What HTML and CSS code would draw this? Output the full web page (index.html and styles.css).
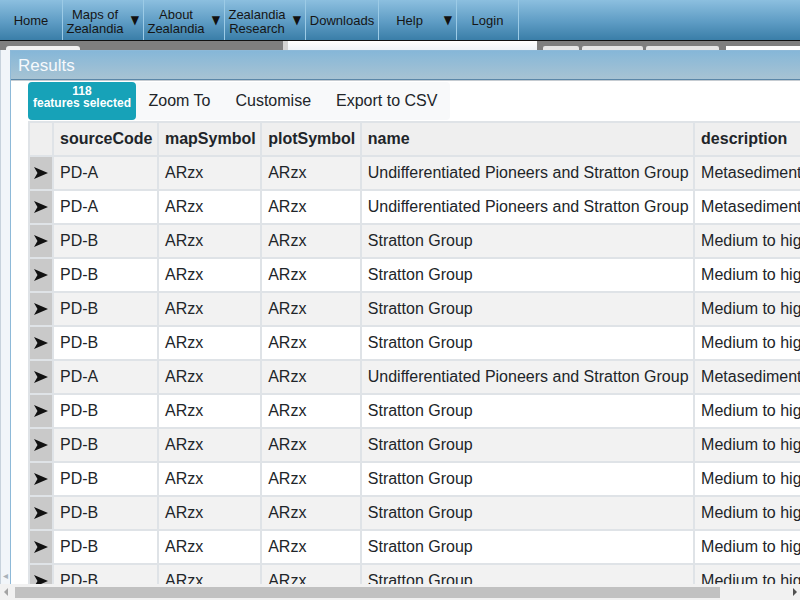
FILE: index.html
```html
<!DOCTYPE html>
<html>
<head>
<meta charset="utf-8">
<link rel="stylesheet" href="styles.css">
</head>
<body>
<div class="app">
  <nav class="nav">
    <div class="nav-item w-home"><span class="nav-label">Home</span></div>
    <div class="nav-item w-drop"><span class="nav-label two">Maps of<br>Zealandia</span><span class="caret">▼</span></div>
    <div class="nav-item w-drop"><span class="nav-label two">About<br>Zealandia</span><span class="caret">▼</span></div>
    <div class="nav-item w-drop"><span class="nav-label two">Zealandia<br>Research</span><span class="caret">▼</span></div>
    <div class="nav-item w-down"><span class="nav-label">Downloads</span></div>
    <div class="nav-item w-help"><span class="nav-label">Help</span><span class="caret">▼</span></div>
    <div class="nav-item w-login"><span class="nav-label">Login</span></div>
  </nav>
  <div class="workspace">
    <div class="strip">
      <div class="seg-left"><div class="pill"></div></div>
      <div class="seg-scroll"></div>
      <div class="seg-white"></div>
      <div class="seg-tabs">
        <div class="tab t1"></div>
        <div class="tab t2"></div>
        <div class="tab t3"></div>
      </div>
      <div class="seg-white2"></div>
    </div>
    <div class="below"><span class="under-arrow">◂</span></div>

    <section class="window">
      <header class="win-title">Results</header>
      <div class="win-body">
        <div class="toolbar">
          <div class="badge"><span>118</span><span>features selected</span></div>
          <div class="btn-group">
            <span class="btn">Zoom To</span>
            <span class="btn">Customise</span>
            <span class="btn">Export to CSV</span>
          </div>
        </div>
        <table class="grid">
          <thead>
            <tr><th class="sel"><div class="sel-box"></div></th><th>sourceCode</th><th>mapSymbol</th><th>plotSymbol</th><th>name</th><th>description</th></tr>
          </thead>
          <tbody>
            <tr><td class="sel"><div class="sel-box"><svg class="arr" viewBox="0 0 14 12"><polygon points="0,0 14,6 0,12 3.5,6"/></svg></div></td><td>PD-A</td><td>ARzx</td><td>ARzx</td><td>Undifferentiated Pioneers and Stratton Group</td><td>Metasedimentary rocks of the Pioneers and Stratton groups</td></tr>
            <tr><td class="sel"><div class="sel-box"><svg class="arr" viewBox="0 0 14 12"><polygon points="0,0 14,6 0,12 3.5,6"/></svg></div></td><td>PD-A</td><td>ARzx</td><td>ARzx</td><td>Undifferentiated Pioneers and Stratton Group</td><td>Metasedimentary rocks of the Pioneers and Stratton groups</td></tr>
            <tr><td class="sel"><div class="sel-box"><svg class="arr" viewBox="0 0 14 12"><polygon points="0,0 14,6 0,12 3.5,6"/></svg></div></td><td>PD-B</td><td>ARzx</td><td>ARzx</td><td>Stratton Group</td><td>Medium to high grade metasedimentary rocks</td></tr>
            <tr><td class="sel"><div class="sel-box"><svg class="arr" viewBox="0 0 14 12"><polygon points="0,0 14,6 0,12 3.5,6"/></svg></div></td><td>PD-B</td><td>ARzx</td><td>ARzx</td><td>Stratton Group</td><td>Medium to high grade metasedimentary rocks</td></tr>
            <tr><td class="sel"><div class="sel-box"><svg class="arr" viewBox="0 0 14 12"><polygon points="0,0 14,6 0,12 3.5,6"/></svg></div></td><td>PD-B</td><td>ARzx</td><td>ARzx</td><td>Stratton Group</td><td>Medium to high grade metasedimentary rocks</td></tr>
            <tr><td class="sel"><div class="sel-box"><svg class="arr" viewBox="0 0 14 12"><polygon points="0,0 14,6 0,12 3.5,6"/></svg></div></td><td>PD-B</td><td>ARzx</td><td>ARzx</td><td>Stratton Group</td><td>Medium to high grade metasedimentary rocks</td></tr>
            <tr><td class="sel"><div class="sel-box"><svg class="arr" viewBox="0 0 14 12"><polygon points="0,0 14,6 0,12 3.5,6"/></svg></div></td><td>PD-A</td><td>ARzx</td><td>ARzx</td><td>Undifferentiated Pioneers and Stratton Group</td><td>Metasedimentary rocks of the Pioneers and Stratton groups</td></tr>
            <tr><td class="sel"><div class="sel-box"><svg class="arr" viewBox="0 0 14 12"><polygon points="0,0 14,6 0,12 3.5,6"/></svg></div></td><td>PD-B</td><td>ARzx</td><td>ARzx</td><td>Stratton Group</td><td>Medium to high grade metasedimentary rocks</td></tr>
            <tr><td class="sel"><div class="sel-box"><svg class="arr" viewBox="0 0 14 12"><polygon points="0,0 14,6 0,12 3.5,6"/></svg></div></td><td>PD-B</td><td>ARzx</td><td>ARzx</td><td>Stratton Group</td><td>Medium to high grade metasedimentary rocks</td></tr>
            <tr><td class="sel"><div class="sel-box"><svg class="arr" viewBox="0 0 14 12"><polygon points="0,0 14,6 0,12 3.5,6"/></svg></div></td><td>PD-B</td><td>ARzx</td><td>ARzx</td><td>Stratton Group</td><td>Medium to high grade metasedimentary rocks</td></tr>
            <tr><td class="sel"><div class="sel-box"><svg class="arr" viewBox="0 0 14 12"><polygon points="0,0 14,6 0,12 3.5,6"/></svg></div></td><td>PD-B</td><td>ARzx</td><td>ARzx</td><td>Stratton Group</td><td>Medium to high grade metasedimentary rocks</td></tr>
            <tr><td class="sel"><div class="sel-box"><svg class="arr" viewBox="0 0 14 12"><polygon points="0,0 14,6 0,12 3.5,6"/></svg></div></td><td>PD-B</td><td>ARzx</td><td>ARzx</td><td>Stratton Group</td><td>Medium to high grade metasedimentary rocks</td></tr>
            <tr><td class="sel"><div class="sel-box"><svg class="arr" viewBox="0 0 14 12"><polygon points="0,0 14,6 0,12 3.5,6"/></svg></div></td><td>PD-B</td><td>ARzx</td><td>ARzx</td><td>Stratton Group</td><td>Medium to high grade metasedimentary rocks</td></tr>
          </tbody>
        </table>
      </div>
    </section>
  </div>
  <div class="hscroll">
    <span class="sb-arrow sb-left"></span>
    <div class="sb-thumb"></div>
    <span class="sb-arrow sb-right"></span>
  </div>
</div>
</body>
</html>
```

FILE: styles.css
```css
* { box-sizing: border-box; }
html, body { margin: 0; padding: 0; }
body {
  width: 800px;
  height: 600px;
  overflow: hidden;
  font-family: "Liberation Sans", Arial, sans-serif;
  background: #f4f7fa;
}
.app {
  position: relative;
  width: 800px;
  height: 600px;
  overflow: hidden;
}

/* nav */
.nav {
  display: flex;
  height: 40px;
  background: linear-gradient(to bottom, #8cbfdf 0%, #5e9cc4 55%, #3a7ea8 100%);
}
.nav-item {
  display: flex;
  align-items: center;
  height: 40px;
  border-right: 1px solid #9ccbe6;
  color: #151515;
  font-size: 13px;
  line-height: 14px;
}
.nav-label {
  flex: 1;
  text-align: center;
  padding-top: 1px;
}
.nav-label.two { padding-top: 4px; }
.caret {
  width: 16px;
  font-size: 12px;
  text-align: center;
  color: #111;
  font-family: "DejaVu Sans", sans-serif;
  transform: scaleX(0.9);
}
.w-home { width: 63px; }
.w-drop { width: 81px; }
.w-down { width: 73px; }
.w-help { width: 78px; }
.w-login { width: 62px; }

/* workspace under the window */
.workspace {
  position: relative;
  height: 560px;
  border-top: 1px solid #111;
  display: flex;
  flex-direction: column;
}
.strip {
  display: flex;
  height: 9px;
  background: #7f7f7f;
}
.seg-left {
  width: 283px;
  padding: 5px 0 0 6px;
}
.pill {
  width: 74px;
  height: 10px;
  background: #f2f2f2;
  border-radius: 3px 3px 0 0;
}
.seg-scroll { width: 5px; background: #d4d4d4; }
.seg-white {
  width: 249px;
  background: linear-gradient(to bottom, #ffffff, #eef3f8);
}
.seg-tabs {
  width: 189px;
  display: flex;
  gap: 3px;
  padding: 5px 0 0 6px;
}
.tab {
  height: 10px;
  background: #e6e6e6;
  border-radius: 2px 2px 0 0;
}
.t1 { width: 36px; }
.t2 { width: 61px; }
.t3 { width: 73px; }
.seg-white2 {
  flex: 1;
  margin-top: 5px;
  background: #ffffff;
}
.below {
  flex: 1;
  background: #f1f5f9;
  border-left: 1px solid #c7d2dc;
  position: relative;
}
.under-arrow {
  position: absolute;
  left: 2px;
  top: 520px;
  font-size: 10px;
  color: #a9b2ba;
  font-family: "DejaVu Sans", sans-serif;
}

/* window */
.window {
  position: absolute;
  left: 10px;
  top: 9px;
  right: -30px;
  bottom: -20px;
  border: 1px solid #8db9d8;
  background: #ffffff;
  overflow: hidden;
}
.win-title {
  height: 29px;
  padding: 4px 0 0 7px;
  color: #f6f9fc;
  font-size: 17px;
  line-height: 22px;
  background: linear-gradient(to bottom, #86b7d8, #a7c3d3);
  border-bottom: 1px solid #5b87a8;
  box-shadow: 0 1px 0 #c6ccd2;
}
.win-body {
  padding: 2px 0 0 17px;
}
.toolbar {
  display: flex;
  height: 38px;
}
.badge {
  width: 108px;
  height: 38px;
  flex-shrink: 0;
  background: #17a2b8;
  border-radius: 4px;
  color: #ffffff;
  font-weight: bold;
  font-size: 12px;
  line-height: 12px;
  padding-top: 3px;
  display: flex;
  flex-direction: column;
  align-items: center;
}
.btn-group {
  display: flex;
  align-items: center;
  background: #f8f9fa;
  border-radius: 0 4px 4px 0;
}
.btn {
  padding: 0 12.5px;
  font-size: 16px;
  color: #212529;
}

/* table */
.grid {
  margin-top: 1px;
  border-collapse: collapse;
  border: 2px solid #dfe3e7;
  font-size: 16px;
  color: #212529;
  white-space: nowrap;
}
.grid th, .grid td {
  border: 2px solid #dfe3e7;
  height: 34px;
  padding: 0 4.5px 0 6px;
  text-align: left;
  vertical-align: middle;
}
.grid th {
  background: #efefef;
  font-weight: bold;
}
.grid tbody tr:nth-child(odd) td { background: #f2f2f2; }
.grid tbody tr:nth-child(even) td { background: #ffffff; }
.grid th.sel, .grid td.sel { padding: 0; }
.grid td.sel { background: #c9c9c9 !important; }
.sel-box {
  width: 22px;
  display: flex;
  justify-content: center;
  align-items: center;
}
.arr {
  width: 14px;
  height: 12px;
  display: block;
  fill: #111;
}

/* page scrollbar */
.hscroll {
  position: absolute;
  left: 0;
  right: 0;
  bottom: 0;
  height: 16px;
  background: #f1f1f1;
  display: flex;
  align-items: center;
}
.sb-arrow {
  width: 0;
  height: 0;
  border-top: 4px solid transparent;
  border-bottom: 4px solid transparent;
}
.sb-left {
  margin-left: 4px;
  border-right: 4px solid #a3a3a3;
}
.sb-thumb {
  margin-left: 7px;
  width: 705px;
  height: 11px;
  background: #c1c1c1;
}
.sb-right {
  margin-left: 73px;
  border-left: 4px solid #505050;
}
```
